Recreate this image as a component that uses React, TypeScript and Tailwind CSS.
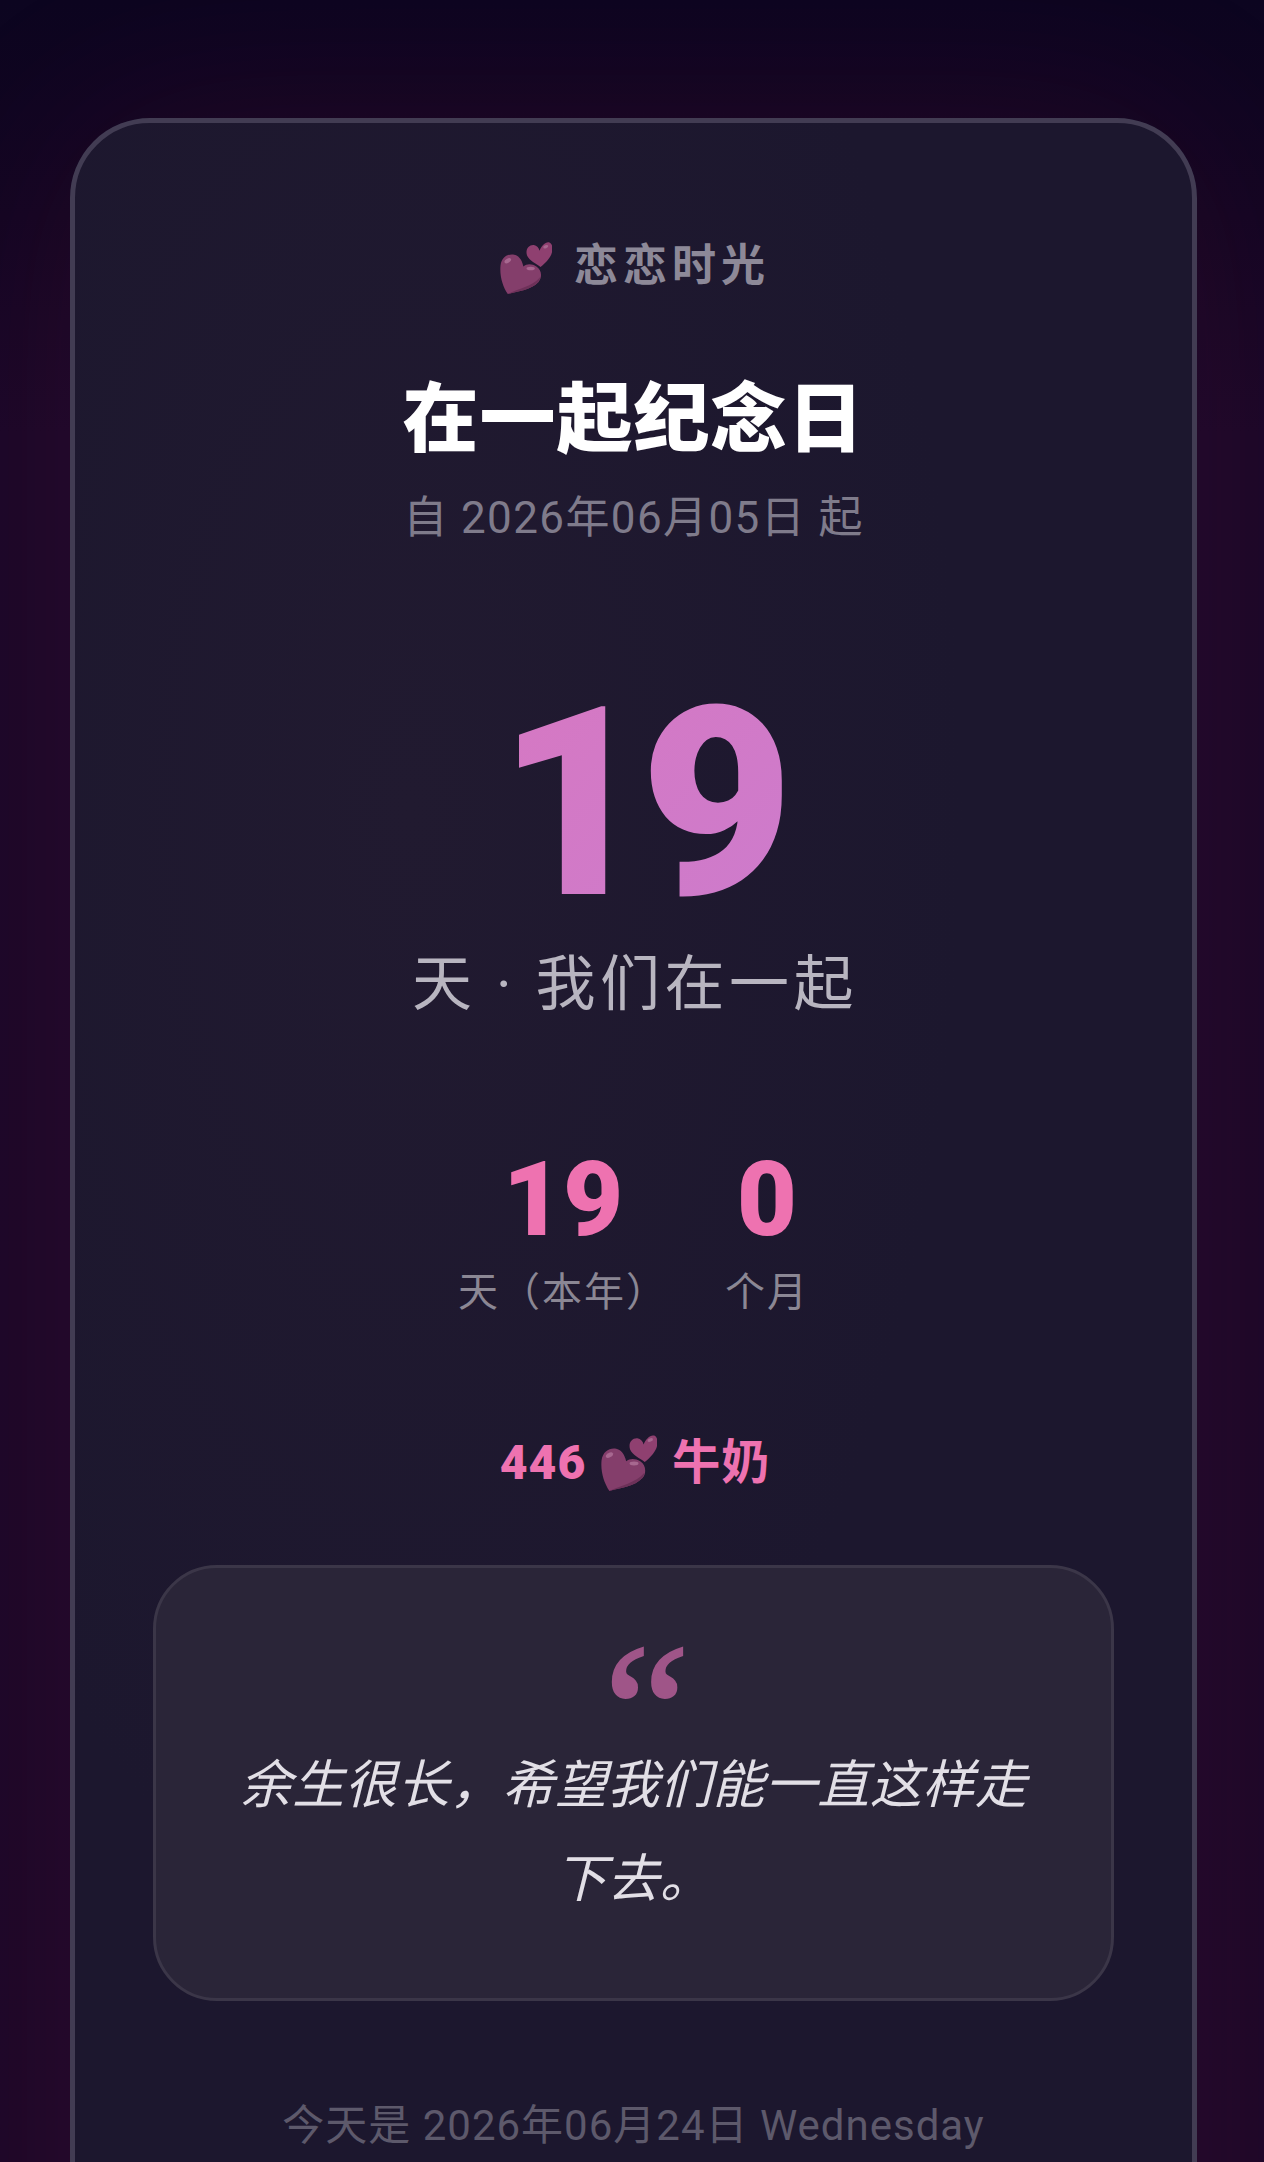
const sans = "font-['Roboto','Noto_Sans_CJK_SC',sans-serif]";

const Hearts = ({ className }: { className: string }) => (
  <svg viewBox="0 0 100 100" className={className}>
    <path d="M78 48C70 42 56 36 52 26 48 14 56 5 65 6 71 7 75 12 76 17 80 7 88-1 95 1 102 4 102 15 99 23 95 33 86 42 78 48Z" fill="#8f4070" />
    <path d="M15 100C5 85-1 65 1 45 3 30 14 23 25 24 35 25 42 33 45 47 52 41 62 42 70 47 80 53 82 68 74 77 60 92 35 95 15 100Z" fill="#843e6b" />
    <path d="M74 77C60 92 35 95 15 100 35 90 62 86 77 68 77 71 76 74 74 77Z" fill="#6d3159" />
    <ellipse cx="15" cy="36" rx="7" ry="4" fill="#a76890" transform="rotate(-30 15 36)" />
    <ellipse cx="59" cy="51" rx="8" ry="3.500" fill="#a76890" />
    <ellipse cx="88" cy="9" rx="5" ry="3" fill="#a76890" transform="rotate(-20 88 9)" />
  </svg>
);

const App = () => {
  return (
    <div className={`relative h-[2162px] overflow-hidden bg-[linear-gradient(180deg,#0c0520_0%,#120622_10%,#190828_20%,#1b0828_100%)] ${sans}`}>
      <div className="mt-[118px] mr-[67px] ml-[70px] h-[2300px] rounded-[80px] border-[5px] border-[#423c53] bg-[radial-gradient(ellipse_at_30%_30%,#211a30_0%,#1c172e_50%,#1c172e_100%)] px-[78px] pt-[115px] text-center shadow-[0_0_200px_rgba(220,30,90,0.1)]">
        <div className="flex h-[56px] items-center justify-center gap-[22px]">
          <Hearts className="mt-[3px] ml-[3px] h-[52px] w-[52px]" />
          <span className="text-[44px] leading-[56px] font-bold tracking-[5px] text-[#8d8998]">恋恋时光</span>
        </div>
        <h1 className="mt-[76px] text-[76px] leading-[100px] font-black tracking-[1px] text-white">在一起纪念日</h1>
        <p className="mt-[18px] text-[44px] leading-[60px] tracking-[1.4px] text-[#7f7b8b]">自 2026年06月05日 起</p>

        <div className="mt-[131px] bg-[linear-gradient(135deg,#dc76bc,#c77dd2)] bg-clip-text pl-[14px] text-[264px] leading-[250px] font-black tracking-[-10px] text-transparent">19</div>
        <p className="mt-[16px] pl-[3px] text-[60px] leading-[80px] tracking-[4.5px] text-[#b8b5c0]">天 · 我们在一起</p>

        <div className="mt-[123px] flex justify-center gap-[57px]">
          <div className="flex flex-col items-center">
            <span className="text-[104px] leading-[104px] font-black text-[#ee72b0]">19</span>
            <span className="mt-[13px] text-[40px] leading-[56px] tracking-[2px] text-[#8b8794]">天（本年）</span>
          </div>
          <div className="flex flex-col items-center">
            <span className="text-[104px] leading-[104px] font-black text-[#ee72b0]">0</span>
            <span className="mt-[13px] text-[40px] leading-[56px] tracking-[2px] text-[#8b8794]">个月</span>
          </div>
        </div>

        <div className="mt-[112px] flex items-center justify-center gap-[15px] pl-[3px] text-[48px] leading-[60px] font-bold text-[#ee72b0]">
          <span className="font-black tracking-[1px]">446</span>
          <Hearts className="h-[56px] w-[56px]" />
          <span className="tracking-[1px]">牛奶</span>
        </div>

        <div className="mt-[72px] rounded-[64px] border-[3px] border-[#3b3648] bg-[#2a2538] px-[80px] pt-[84px] pb-[71px]">
          <div className="h-[60px] pl-[10px] font-['Liberation_Serif',serif] text-[195px] leading-[120px] text-[#9f5588] italic [-webkit-text-stroke:2px_#9f5588]">“</div>
          <p className="mt-[27px] text-[52px] leading-[94px] tracking-[0.5px] text-[#e2dfe6] italic">余生很长，希望我们能一直这样走下去。</p>
        </div>

        <p className="mt-[97px] text-[42px] leading-[56px] tracking-[1px] text-[#5d596b]">今天是 2026年06月24日 Wednesday</p>
      </div>
    </div>
  );
};

export default App;
